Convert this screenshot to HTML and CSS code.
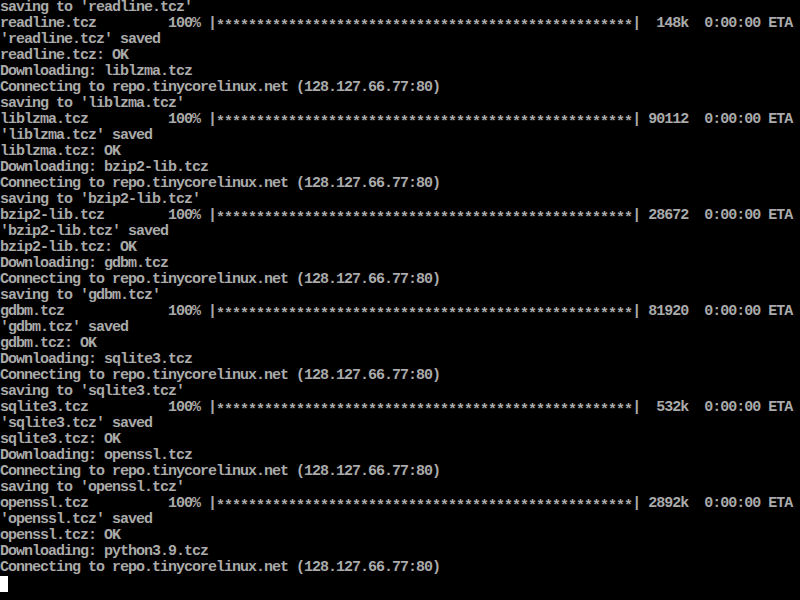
FILE: index.html
```html
<!DOCTYPE html>
<html>
<head>
<meta charset="utf-8">
<link rel="stylesheet" href="styles.css">
</head>
<body>
<pre class="console">saving to 'readline.tcz'
readline.tcz         100% |<span class="bar">****************************************************</span>|  148k  0:00:00 ETA
'readline.tcz' saved
readline.tcz: OK
Downloading: liblzma.tcz
Connecting to repo.tinycorelinux.net (128.127.66.77:80)
saving to 'liblzma.tcz'
liblzma.tcz          100% |<span class="bar">****************************************************</span>| 90112  0:00:00 ETA
'liblzma.tcz' saved
liblzma.tcz: OK
Downloading: bzip2-lib.tcz
Connecting to repo.tinycorelinux.net (128.127.66.77:80)
saving to 'bzip2-lib.tcz'
bzip2-lib.tcz        100% |<span class="bar">****************************************************</span>| 28672  0:00:00 ETA
'bzip2-lib.tcz' saved
bzip2-lib.tcz: OK
Downloading: gdbm.tcz
Connecting to repo.tinycorelinux.net (128.127.66.77:80)
saving to 'gdbm.tcz'
gdbm.tcz             100% |<span class="bar">****************************************************</span>| 81920  0:00:00 ETA
'gdbm.tcz' saved
gdbm.tcz: OK
Downloading: sqlite3.tcz
Connecting to repo.tinycorelinux.net (128.127.66.77:80)
saving to 'sqlite3.tcz'
sqlite3.tcz          100% |<span class="bar">****************************************************</span>|  532k  0:00:00 ETA
'sqlite3.tcz' saved
sqlite3.tcz: OK
Downloading: openssl.tcz
Connecting to repo.tinycorelinux.net (128.127.66.77:80)
saving to 'openssl.tcz'
openssl.tcz          100% |<span class="bar">****************************************************</span>| 2892k  0:00:00 ETA
'openssl.tcz' saved
openssl.tcz: OK
Downloading: python3.9.tcz
Connecting to repo.tinycorelinux.net (128.127.66.77:80)
<span class="cursor"></span></pre>
</body>
</html>
```
FILE: styles.css
```css
html, body {
  margin: 0;
  padding: 0;
  background: #000;
  height: 100%;
  overflow: hidden;
}
.console {
  margin: 0;
  padding: 0;
  color: #aaaaaa;
  font-family: "Liberation Mono", "DejaVu Sans Mono", monospace;
  font-size: 15px;
  font-weight: bold;
  letter-spacing: -1px;
  line-height: 16px;
  white-space: pre;
}
.bar {
  display: inline-block;
  height: 16px;
  line-height: 22px;
  vertical-align: top;
}
.cursor {
  display: inline-block;
  width: 8px;
  height: 16px;
  background: #ffffff;
  vertical-align: top;
}
```
